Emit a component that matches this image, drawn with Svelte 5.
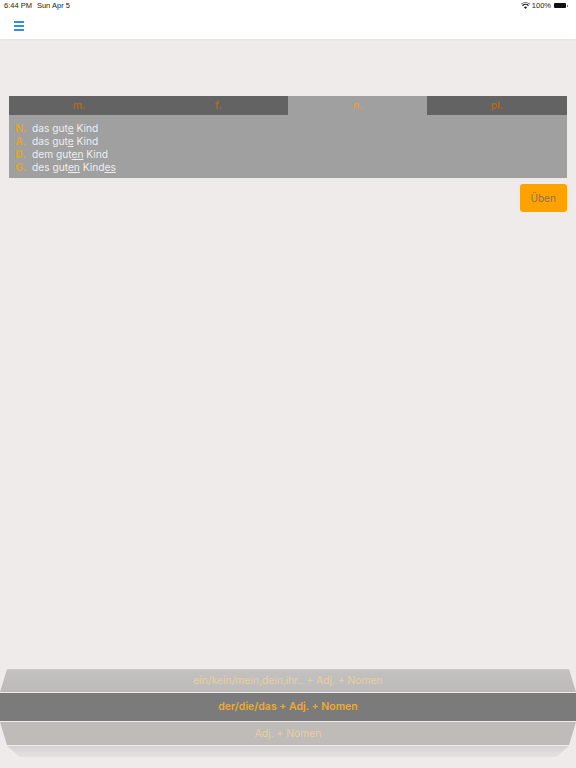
<script lang="ts">
  const tabs = ['m.', 'f.', 'n.', 'pl.'];
  const activeTab = 'n.';

  // each ending is underlined
  const rows = [
    { kase: 'N.', parts: ['das gut', 'e', ' Kind'] },
    { kase: 'A.', parts: ['das gut', 'e', ' Kind'] },
    { kase: 'D.', parts: ['dem gut', 'en', ' Kind'] },
    { kase: 'G.', parts: ['des gut', 'en', ' Kind', 'es'] },
  ];
</script>

<div class="page">
  <div class="status">
    <span class="time">6:44 PM</span>
    <span class="date">Sun Apr 5</span>
    <span class="status-right">
      <svg class="wifi" width="9" height="7" viewBox="0 0 18 14" aria-hidden="true">
        <path d="M9 14 L5.8 10.4 A4.6 4.6 0 0 1 12.2 10.4 Z M3.9 8.3 L2.2 6.4 A9.8 9.8 0 0 1 15.8 6.4 L14.1 8.3 A7.2 7.2 0 0 0 3.9 8.3 Z M0.9 4.9 L0 3.9 A13 13 0 0 1 18 3.9 L17.1 4.9 A11.7 11.7 0 0 0 0.9 4.9 Z" fill="#222" />
      </svg>
      <span>100%</span>
      <span class="battery"></span>
    </span>
  </div>

  <header class="nav">
    <button class="menu" type="button" aria-label="Menu">
      <span></span><span></span><span></span>
    </button>
  </header>

  <main class="content">
    <div class="table">
      <div class="tabs">
        {#each tabs as tab}
          <div class="tab" class:active={tab === activeTab}>{tab}</div>
        {/each}
      </div>
      <div class="panel">
        {#each rows as row}
          <div class="row">
            <span class="kase">{row.kase}</span>
            <span>
              {#each row.parts as part, i}
                {#if i % 2 === 1}<u>{part}</u>{:else}{part}{/if}
              {/each}
            </span>
          </div>
        {/each}
      </div>
    </div>
    <div class="actions">
      <button class="practice" type="button">Üben</button>
    </div>
  </main>

  <div class="picker">
    <div class="item top">ein/kein/mein,dein,ihr.. + Adj. + Nomen</div>
    <div class="item selected">der/die/das + Adj. + Nomen</div>
    <div class="item below">Adj. + Nomen</div>
    <div class="item last"></div>
  </div>
</div>

<style>
  :global(body) {
    margin: 0;
    background: #eeebea;
  }
  .page {
    height: 768px;
    display: flex;
    flex-direction: column;
    overflow: hidden;
    font-family: Inter, "Open Sans", sans-serif;
    background: #eeebea;
  }
  .status {
    height: 11px;
    padding: 0 10px 0 4px;
    display: flex;
    align-items: center;
    gap: 5px;
    background: #fff;
    font: 7.5px/11px "Liberation Sans", sans-serif;
    color: #222;
  }
  .status-right {
    margin-left: auto;
    display: flex;
    align-items: center;
    gap: 2px;
  }
  .battery {
    position: relative;
    width: 12px;
    height: 5px;
    margin-left: 1px;
    border-radius: 1px;
    background: #111;
  }
  .battery::after {
    content: '';
    position: absolute;
    left: 13px;
    top: 1.5px;
    width: 1px;
    height: 2px;
    background: #777;
  }
  .nav {
    height: 28px;
    padding-left: 14px;
    display: flex;
    align-items: flex-start;
    background: #fff;
    box-shadow: 0 1px 2px rgba(0, 0, 0, 0.05);
  }
  .menu {
    width: 10px;
    margin-top: 9.5px;
    padding: 0;
    display: flex;
    flex-direction: column;
    gap: 2px;
    border: 0;
    background: none;
  }
  .menu span {
    height: 2px;
    background: #2f8fe6;
  }
  .content {
    flex: 1;
    padding: 57px 9.3px 0;
  }
  .tabs {
    display: grid;
    grid-template-columns: repeat(4, 1fr);
  }
  .tab {
    height: 19px;
    text-align: center;
    font-size: 10.5px;
    font-weight: 500;
    line-height: 20px;
    color: #b26d1e;
    background: #636363;
  }
  .tab.active {
    color: #e6a02c;
    background: #a0a0a0;
  }
  .panel {
    height: 63px;
    box-sizing: border-box;
    padding-top: 7px;
    background: #a0a0a0;
  }
  .row {
    height: 13px;
    padding-left: 6px;
    display: flex;
    font-size: 10.2px;
    line-height: 13px;
    color: #eeeeee;
    white-space: pre;
  }
  .kase {
    width: 16.7px;
    font-weight: 600;
    color: #e6a521;
  }
  .actions {
    margin-top: 6px;
    display: flex;
    justify-content: flex-end;
  }
  .practice {
    width: 47px;
    height: 28px;
    padding: 0;
    border: 0;
    border-radius: 3px;
    font: 10px Inter, sans-serif;
    color: #85784f;
    background: #ffa200;
  }
  .picker {
    display: flex;
    flex-direction: column;
    margin-bottom: 11px;
  }
  .item {
    text-align: center;
    color: #e7cf9f;
    font-size: 10.3px;
    background: #bebbb9;
  }
  .top {
    height: 23px;
    line-height: 23px;
    clip-path: polygon(7px 0, 569px 0, 576px 100%, 0 100%);
    background: linear-gradient(#cfcccb, #c3c1bf 8%, #bdbbb9);
  }
  .selected {
    height: 28px;
    margin-top: 1px;
    line-height: 28px;
    font-size: 10.5px;
    font-weight: 600;
    color: #ecac2e;
    background: #7b7b7b;
  }
  .below {
    height: 23px;
    margin-top: 1px;
    line-height: 23px;
    clip-path: polygon(0 0, 100% 0, 569px 100%, 7px 100%);
  }
  .last {
    height: 11px;
    margin-top: 1px;
    clip-path: polygon(7px 0, 569px 0, 556px 100%, 20px 100%);
    background: linear-gradient(#d6d3d1, #e4e1e0);
  }
</style>
